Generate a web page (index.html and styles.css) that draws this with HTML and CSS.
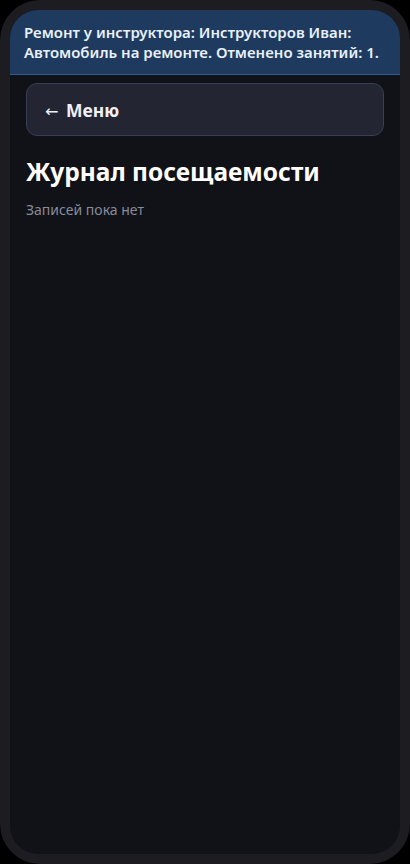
FILE: index.html
```html
<!DOCTYPE html>
<html lang="ru">
<head>
<meta charset="utf-8">
<link rel="stylesheet" href="styles.css">
</head>
<body>
<div class="phone">
  <div class="screen">
    <div class="banner">Ремонт у инструктора: Инструкторов Иван: Автомобиль на ремонте. Отменено занятий: 1.</div>
    <div class="content">
      <button class="menu-btn"><span class="arrow">←</span> Меню</button>
      <h1 class="title">Журнал посещаемости</h1>
      <p class="empty">Записей пока нет</p>
    </div>
  </div>
</div>
</body>
</html>
```
FILE: styles.css
```css
html, body {
  margin: 0;
  padding: 0;
  background: #000;
}
body {
  font-family: "Noto Sans", "Open Sans", sans-serif;
}
.phone {
  box-sizing: border-box;
  width: 410px;
  height: 864px;
  padding: 10px;
  background: #1c1c21;
  border-radius: 40px;
}
.screen {
  height: 100%;
  background: #111217;
  border-radius: 28px;
  overflow: hidden;
}
.banner {
  background: #1e3a5f;
  border-bottom: 1px solid #2f5d91;
  color: #e8f0fb;
  font-size: 15px;
  font-weight: 600;
  line-height: 20px;
  padding: 12px 14px 12px 14px;
}
.content {
  padding: 8px 16px;
}
.menu-btn {
  display: block;
  box-sizing: border-box;
  width: 100%;
  height: 53px;
  text-align: left;
  padding: 0 17px 0 18px;
  background: #232533;
  border: 1px solid #3a3e52;
  border-radius: 11px;
  color: #eef0f6;
  font-family: inherit;
  font-size: 17.5px;
  font-weight: 700;
}
.arrow {
  font-family: "DejaVu Sans", sans-serif;
  font-weight: 400;
  font-size: 16px;
  margin-right: 3px;
}
.title {
  margin: 20px 0 0;
  color: #ffffff;
  font-size: 24.5px;
  font-weight: 700;
  line-height: 32px;
}
.empty {
  margin: 12px 0 0;
  color: #878b9c;
  font-size: 14px;
  line-height: 20px;
}
```
